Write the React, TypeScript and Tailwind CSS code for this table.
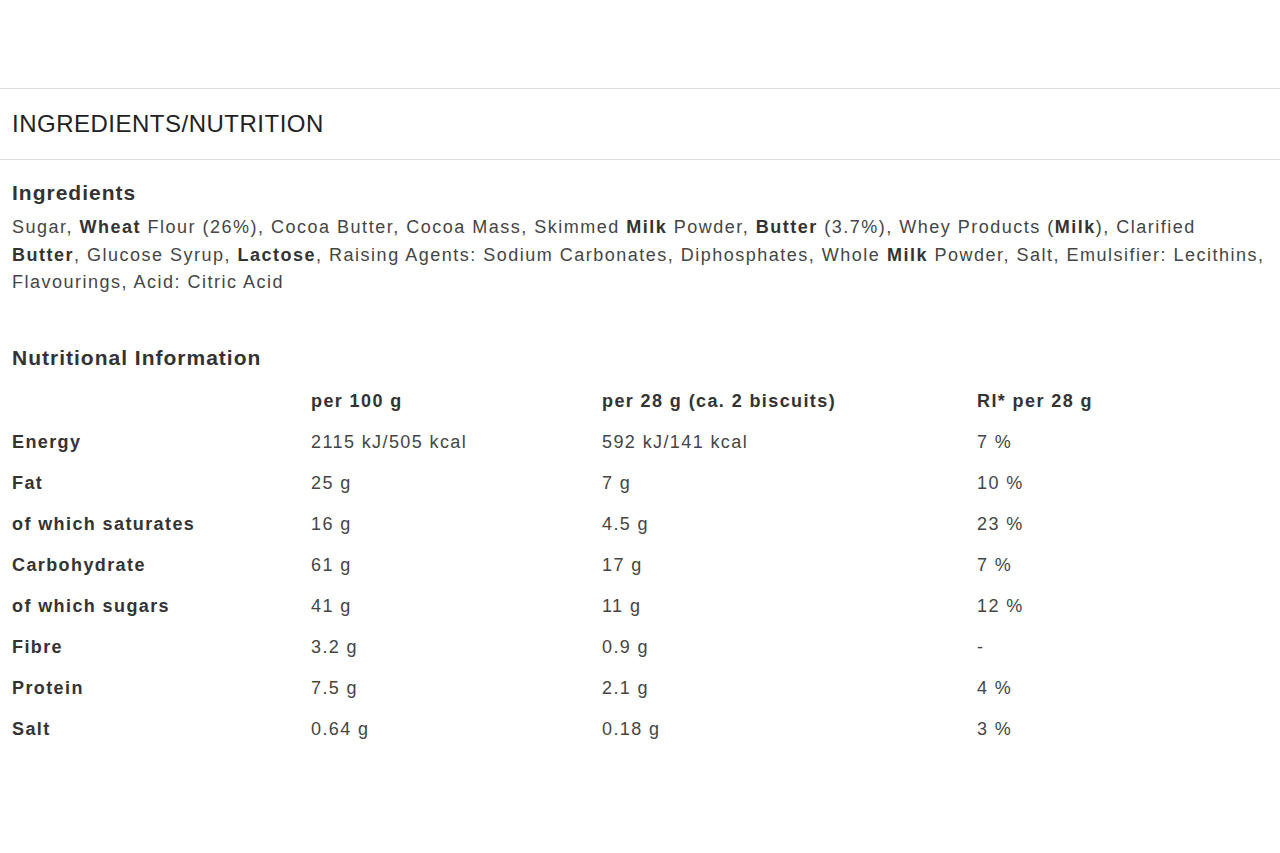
export default function App() {
  const rows = [
    ["Energy", "2115 kJ/505 kcal", "592 kJ/141 kcal", "7 %"],
    ["Fat", "25 g", "7 g", "10 %"],
    ["of which saturates", "16 g", "4.5 g", "23 %"],
    ["Carbohydrate", "61 g", "17 g", "7 %"],
    ["of which sugars", "41 g", "11 g", "12 %"],
    ["Fibre", "3.2 g", "0.9 g", "-"],
    ["Protein", "7.5 g", "2.1 g", "4 %"],
    ["Salt", "0.64 g", "0.18 g", "3 %"],
  ];

  return (
    <div className="w-[1280px] h-[853px] bg-white text-[#454545] font-['Liberation_Sans',Arial,sans-serif] overflow-hidden">
      <div className="h-[88px]" />
      <div className="border-t border-b border-[#dcdcdc] h-[72px] flex items-center px-3">
        <h2 className="text-[24px] text-[#222] tracking-[0.5px]">INGREDIENTS/NUTRITION</h2>
      </div>

      <section className="px-3 pt-[19px]">
        <h3 className="text-[21px] font-bold text-[#333] leading-[28px] tracking-[1px]">Ingredients</h3>
        <p className="text-[18px] leading-[27.5px] mt-[7px] tracking-[1.5px]">
          Sugar, <b className="text-[#333]">Wheat</b> Flour (26%), Cocoa Butter, Cocoa Mass, Skimmed{" "}
          <b className="text-[#333]">Milk</b> Powder, <b className="text-[#333]">Butter</b> (3.7%), Whey Products (
          <b className="text-[#333]">Milk</b>), Clarified <b className="text-[#333]">Butter</b>, Glucose Syrup,{" "}
          <b className="text-[#333]">Lactose</b>, Raising Agents: Sodium Carbonates, Diphosphates, Whole{" "}
          <b className="text-[#333]">Milk</b> Powder, Salt, Emulsifier: Lecithins, Flavourings, Acid: Citric Acid
        </p>
      </section>

      <section className="px-3 pt-[47px]">
        <h3 className="text-[21px] font-bold text-[#333] leading-[28px] tracking-[1px]">Nutritional Information</h3>
        <div className="grid grid-cols-[299px_291px_375px_1fr] text-[18px] tracking-[1.4px] mt-[16px]">
          <div className="h-[41px]" />
          <div className="h-[41px] font-bold text-[#333]">per 100 g</div>
          <div className="h-[41px] font-bold text-[#333]">per 28 g (ca. 2 biscuits)</div>
          <div className="h-[41px] font-bold text-[#333]">RI* per 28 g</div>
          {rows.map((r) => (
            <>
              <div key={r[0]} className="h-[41px] font-bold text-[#333]">{r[0]}</div>
              <div className="h-[41px]">{r[1]}</div>
              <div className="h-[41px]">{r[2]}</div>
              <div className="h-[41px]">{r[3]}</div>
            </>
          ))}
        </div>
      </section>
    </div>
  );
}
